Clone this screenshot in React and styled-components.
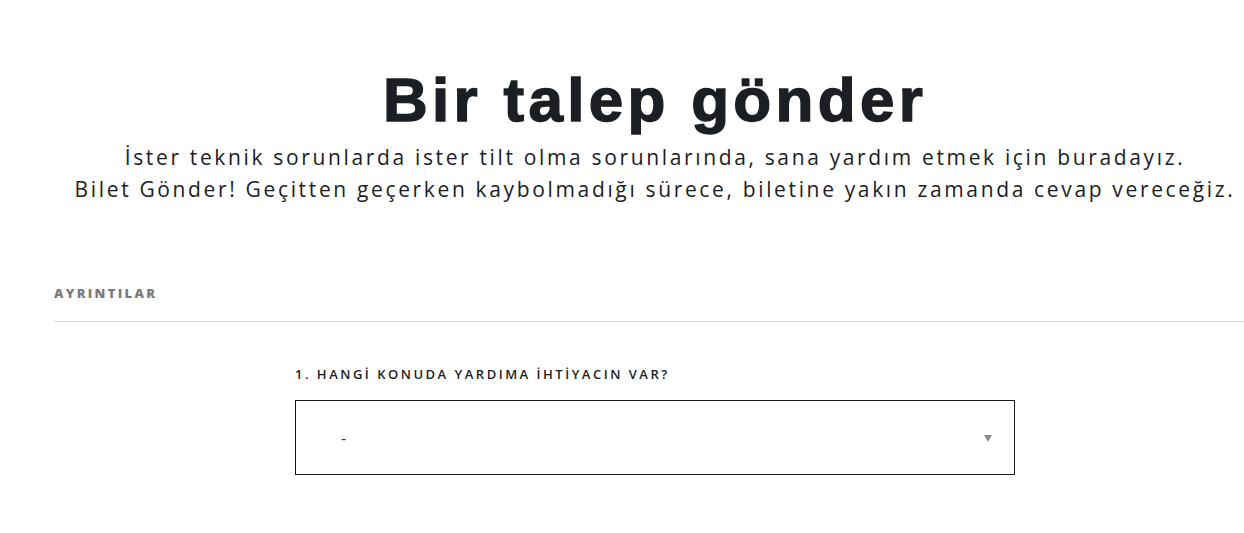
import styled, { createGlobalStyle } from 'styled-components'

const GlobalStyle = createGlobalStyle`
  html, body {
    margin: 0;
    padding: 0;
    background: #fff;
    overflow-x: hidden;
  }
  body {
    font-family: 'Open Sans', 'Lato', sans-serif;
    color: #1b1e24;
  }
`

const Page = styled.div`
  width: 1202px;
  margin-left: 54px;
  padding-top: 64px;
`

const Hero = styled.header`
  display: flex;
  flex-direction: column;
  align-items: center;
  text-align: center;
`

const Title = styled.h1`
  margin: 0;
  font-family: 'Liberation Sans', Arial, sans-serif;
  font-weight: 700;
  font-size: 62px;
  line-height: 72px;
  letter-spacing: 4.3px;
  color: #1b1e23;
  -webkit-text-stroke: 1.4px #1b1e23;
`

const Lead = styled.p`
  margin: 5px 0 0;
  font-size: 21px;
  line-height: 32px;
  letter-spacing: 2.65px;
  color: #1b1e24;
  white-space: nowrap;
`

const Section = styled.section`
  margin-top: 79px;
`

const SectionTitle = styled.h2`
  margin: 0;
  padding-bottom: 19px;
  border-bottom: 1px solid #d6d6d6;
  font-size: 13px;
  font-weight: 800;
  letter-spacing: 2.3px;
  color: #7b7b7b;
  text-transform: uppercase;
`

const Field = styled.div`
  width: 720px;
  margin: 43px auto 0;
`

const Label = styled.label`
  display: block;
  font-size: 13px;
  font-weight: 600;
  letter-spacing: 2.5px;
  color: #1b1e24;
  margin-bottom: 17px;
`

const SelectBox = styled.div`
  position: relative;
  box-sizing: border-box;
  height: 75px;
  border: 1px solid #1b1b1b;
  display: flex;
  align-items: center;
  padding: 0 45px;
  font-size: 16px;
  color: #333;
`

const Arrow = styled.span`
  position: absolute;
  right: 22px;
  top: 50%;
  margin-top: -3px;
  width: 0;
  height: 0;
  border-left: 4px solid transparent;
  border-right: 4px solid transparent;
  border-top: 7px solid #8a8a8a;
`

export default function App() {
  return (
    <>
      <GlobalStyle />
      <Page>
        <Hero>
          <Title>Bir talep gönder</Title>
          <Lead>
            İster teknik sorunlarda ister tilt olma sorunlarında, sana yardım etmek için buradayız.
            <br />
            Bilet Gönder! Geçitten geçerken kaybolmadığı sürece, biletine yakın zamanda cevap vereceğiz.
          </Lead>
        </Hero>
        <Section>
          <SectionTitle>Ayrıntılar</SectionTitle>
          <Field>
            <Label>1. HANGİ KONUDA YARDIMA İHTİYACIN VAR?</Label>
            <SelectBox>
              -
              <Arrow />
            </SelectBox>
          </Field>
        </Section>
      </Page>
    </>
  )
}
